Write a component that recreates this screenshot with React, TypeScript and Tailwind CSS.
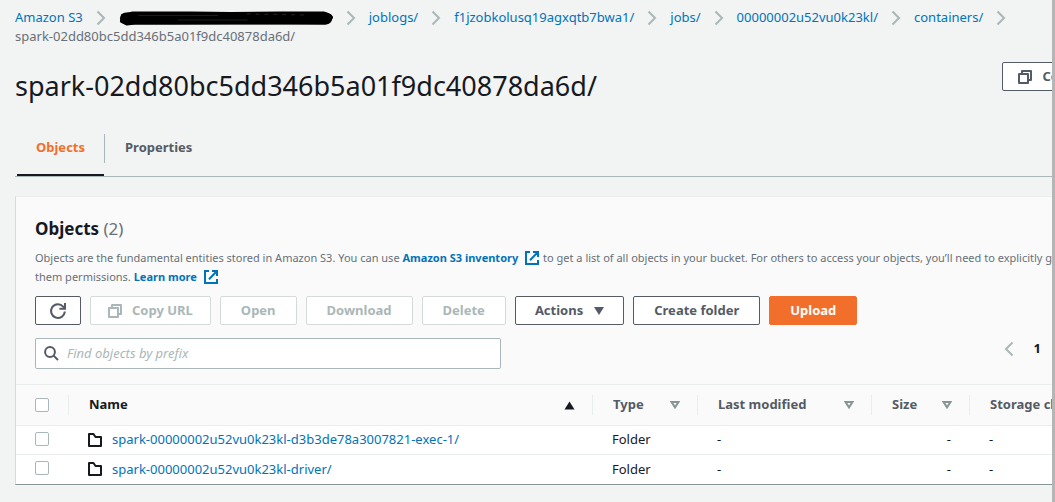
import React from "react";

type IconProps = { className?: string };

function ChevronRight() {
  return (
    <svg width="10" height="16" viewBox="0 0 10 16" fill="none" stroke="#aab7b8" strokeWidth="2" aria-hidden="true">
      <path d="M1.5 1.5 8 8l-6.5 6.5" />
    </svg>
  );
}

function ChevronLeft() {
  return (
    <svg width="10" height="16" viewBox="0 0 10 16" fill="none" stroke="#aab7b8" strokeWidth="2" aria-hidden="true">
      <path d="M8.5 1.5 2 8l6.5 6.5" />
    </svg>
  );
}

function CopyIcon({ className }: IconProps) {
  return (
    <svg className={className} width="14" height="14" viewBox="0 0 14 14" fill="none" stroke="currentColor" strokeWidth="2" strokeLinejoin="round" aria-hidden="true">
      <path d="M1 4h9v9H1z" />
      <path d="M4 4V1h9v9h-3" />
    </svg>
  );
}

function RefreshIcon() {
  return (
    <svg width="18" height="18" viewBox="0 0 18 18" fill="none" stroke="currentColor" strokeWidth="2" aria-hidden="true">
      <path d="M15.8 9.5A6.9 6.9 0 1 1 14.2 4.6l1.3 1.6" />
      <path d="M16 1v5.8h-5.6" />
    </svg>
  );
}

function ExternalIcon() {
  return (
    <svg className="mx-1 inline-block align-[-3px]" width="14" height="14" viewBox="0 0 14 14" fill="none" stroke="currentColor" strokeWidth="2" aria-hidden="true">
      <path d="M5 1H1v12h12V9" />
      <path d="M8 1h5v5M13 1 5 9.2" />
    </svg>
  );
}

function SearchIcon() {
  return (
    <svg width="15" height="15" viewBox="0 0 15 15" fill="none" stroke="#545b64" strokeWidth="2" aria-hidden="true">
      <circle cx="6" cy="6" r="4.9" />
      <path d="m9.6 9.6 4.4 4.4" />
    </svg>
  );
}

function FolderIcon() {
  return (
    <svg width="14" height="14" viewBox="0 0 14 14" fill="none" stroke="#16191f" strokeWidth="2" strokeLinejoin="round" aria-hidden="true">
      <path d="M1 1h4.5l2 3H13v9H1z" />
    </svg>
  );
}

function SortAscending() {
  return (
    <svg width="11" height="9" viewBox="0 0 11 9" fill="#16191f" aria-hidden="true">
      <path d="M5.5 0.5 10.5 8.5H0.5z" />
    </svg>
  );
}

function SortNone() {
  return (
    <svg width="10" height="8" viewBox="0 0 10 8" fill="none" stroke="#879596" strokeWidth="2" aria-hidden="true">
      <path d="M1.5 1h7L5 6.4z" />
    </svg>
  );
}

function RedactedName() {
  return (
    <svg width="214" height="16" viewBox="0 0 217 16" preserveAspectRatio="none" fill="none" stroke="#000" strokeLinecap="round" strokeLinejoin="round" aria-hidden="true">
      <path d="M7 8.5H210" strokeWidth="12" />
      <path d="M4 6l10-2.5h60l40 .5 50-.5h44l6 2.500" strokeWidth="4" />
      <path d="M3 11l5 2.500 8-1h40l60-.3h60l33 .3 4-2 2-3" strokeWidth="4" />
      <path d="M20 5.500h80M60 10h70" stroke="#1c1c1c" strokeWidth="1" />
      <path d="M130 4l60 1" stroke="#262626" strokeWidth="1" strokeDasharray="3 6" />
    </svg>
  );
}

const crumbs = ["joblogs/", "f1jzobkolusq19agxqtb7bwa1/", "jobs/", "00000002u52vu0k23kl/", "containers/"];

const buttonBase = "flex h-[29px] items-center justify-center rounded-xs border text-[13px] font-bold";
const enabled = `${buttonBase} border-[#545b64] bg-white text-[#545b64]`;
const disabled = `${buttonBase} border-[#d5dbdb] bg-white text-[#aab7b8]`;

const link = "text-[#0073bb]";

function Check({ label }: { label: string }) {
  return (
    <input
      type="checkbox"
      aria-label={label}
      className="block size-3.5 appearance-none rounded-xs border border-[#aab7b8] bg-white"
    />
  );
}

type HeadProps = { label: string; sort?: "asc" | "none"; last?: boolean };

function HeadCell({ label, sort, last }: HeadProps) {
  return (
    <th scope="col" className="p-0 text-left font-bold" aria-sort={sort === "asc" ? "ascending" : undefined}>
      <div
        className={
          last
            ? "flex h-5 items-center justify-between px-5 whitespace-nowrap"
            : "flex h-5 items-center justify-between border-r border-[#eaeded] pr-[17px] pl-5"
        }
      >
        <span className={sort === "asc" ? "text-[#16191f]" : "text-[#545b64]"}>{label}</span>
        {sort === "asc" ? <SortAscending /> : <SortNone />}
      </div>
    </th>
  );
}

const rows = ["spark-00000002u52vu0k23kl-d3b3de78a3007821-exec-1/", "spark-00000002u52vu0k23kl-driver/"];

export default function App() {
  return (
    <div className="flex min-h-screen bg-[#f2f3f3] font-['Noto_Sans',sans-serif] text-[13px] text-[#16191f]">
      <div className="min-w-0 flex-1 overflow-hidden">
        <main className="min-w-[1150px] px-[15px] pt-2 pb-4">
          <nav aria-label="Breadcrumbs">
            <ol className="flex flex-wrap gap-x-[13px] leading-[19px]">
              <li className="flex items-center gap-[13px]">
                <a href="#s3" className={link}>Amazon S3</a>
                <ChevronRight />
              </li>
              <li className="flex items-center gap-[13px]">
                <a href="#bucket" aria-label="Bucket"><RedactedName /></a>
                <ChevronRight />
              </li>
              {crumbs.map((c) => (
                <li key={c} className="flex items-center gap-[13px]">
                  <a href="#folder" className={link}>{c}</a>
                  <ChevronRight />
                </li>
              ))}
              <li className="text-[#687078]">spark-02dd80bc5dd346b5a01f9dc40878da6d/</li>
            </ol>
          </nav>

          <header className="mt-4 flex items-start justify-between">
            <h1 className="pt-1.5 text-[27px] leading-9">spark-02dd80bc5dd346b5a01f9dc40878da6d/</h1>
            <button type="button" className={`${enabled} gap-2.5 px-[15px] whitespace-nowrap`}>
              <CopyIcon />
              Copy S3 URI
            </button>
          </header>

          <div role="tablist" className="mt-4 flex h-[57px] border-b border-[#aab7b8] pl-0.5 font-bold">
            <button type="button" role="tab" aria-selected="true" className="flex items-center border-b-2 border-[#16191f] pt-0.5 text-[#f26f2b]">
              <span className="px-[19px]">Objects</span>
            </button>
            <button type="button" role="tab" aria-selected="false" className="flex items-center text-[#545b64]">
              <span className="flex h-[29px] items-center border-l border-[#aab7b8] px-5">Properties</span>
            </button>
          </div>

          <section className="mt-[19px] border border-t-[#eaeded] border-r-[#d5dbdb] border-b-[#879596] border-l-[#d5dbdb] bg-[#fafafa]">
            <div className="px-[19px] pt-5 pb-[15px]">
              <h2 className="text-[17px] leading-6 font-bold">
                Objects <span className="font-normal text-[#687078]">(2)</span>
              </h2>
              <p className="mt-[7px] pr-5 text-[11px] leading-[19px] text-[#687078]">
                Objects are the fundamental entities stored in Amazon S3. You can use{" "}
                <a href="#inventory" className="font-bold text-[#0073bb]">Amazon S3 inventory <ExternalIcon /></a>
                to get a list of all objects in your bucket. For others to access your objects, you’ll need to explicitly grant
                them permissions. <a href="#learn" className="font-bold text-[#0073bb]">Learn more <ExternalIcon /></a>
              </p>

              <div className="mt-2.5 flex gap-[9px]">
                <button type="button" aria-label="Refresh" className={`${enabled} px-[13px]`}><RefreshIcon /></button>
                <button type="button" disabled className={`${disabled} gap-2.5 px-[17px]`}>
                  <CopyIcon />
                  Copy URL
                </button>
                <button type="button" disabled className={`${disabled} px-5`}>Open</button>
                <button type="button" disabled className={`${disabled} px-5`}>Download</button>
                <button type="button" disabled className={`${disabled} px-5`}>Delete</button>
                <button type="button" className={`${enabled} gap-[11px] px-[19px]`}>
                  Actions
                  <svg width="10" height="8" viewBox="0 0 10 8" fill="currentColor" aria-hidden="true">
                    <path d="M0 0h10L5 8z" />
                  </svg>
                </button>
                <button type="button" className={`${enabled} px-5`}>Create folder</button>
                <button type="button" className={`${buttonBase} border-[#f26f2b] bg-[#f26f2b] px-5 text-white`}>Upload</button>
              </div>

              <div className="mt-[13px] flex items-start justify-between">
                <label className="flex h-[31px] w-[466px] items-center gap-2 rounded-xs border border-[#aab7b8] bg-white px-2">
                  <SearchIcon />
                  <input
                    type="text"
                    aria-label="Find objects by prefix"
                    placeholder="Find objects by prefix"
                    className="min-w-0 flex-1 bg-transparent outline-none placeholder:text-[#aab7b8] placeholder:italic"
                  />
                </label>
                <div className="flex h-[22px] items-center gap-5 pr-6 font-bold">
                  <button type="button" aria-label="Previous page"><ChevronLeft /></button>
                  <button type="button" aria-current="page">1</button>
                  <button type="button" aria-label="Next page"><ChevronRight /></button>
                  <span className="w-0" />
                </div>
              </div>
            </div>

            <table className="w-full table-fixed border-collapse">
              <colgroup>
                <col className="w-[53px]" />
                <col />
                <col className="w-[105px]" />
                <col className="w-[174px]" />
                <col className="w-[98px]" />
                <col className="w-[164px]" />
              </colgroup>
              <thead>
                <tr className="h-[41px] border-y border-[#eaeded]">
                  <th scope="col" className="p-0">
                    <div className="flex h-5 items-center border-r border-[#eaeded] pl-[19px]">
                      <Check label="Select all objects" />
                    </div>
                  </th>
                  <HeadCell label="Name" sort="asc" />
                  <HeadCell label="Type" />
                  <HeadCell label="Last modified" />
                  <HeadCell label="Size" />
                  <HeadCell label="Storage class" last />
                </tr>
              </thead>
              <tbody className="bg-white">
                {rows.map((name) => (
                  <tr key={name} className="h-[29px] border-b border-[#eaeded] last:border-b-0">
                    <td className="p-0 pb-0.5 pl-[19px]"><Check label={`Select ${name}`} /></td>
                    <td className="p-0 pl-[19px]">
                      <div className="flex items-center gap-2.5">
                        <FolderIcon />
                        <a href="#object" className={link}>{name}</a>
                      </div>
                    </td>
                    <td className="p-0 pl-[19px]">Folder</td>
                    <td className="p-0 pl-[19px]">-</td>
                    <td className="p-0 pr-[19px] text-right">-</td>
                    <td className="p-0 pl-[19px]">-</td>
                  </tr>
                ))}
              </tbody>
            </table>
          </section>
        </main>
      </div>
      <div className="w-[3px] shrink-0 bg-[#b5b5b5]" />
    </div>
  );
}
